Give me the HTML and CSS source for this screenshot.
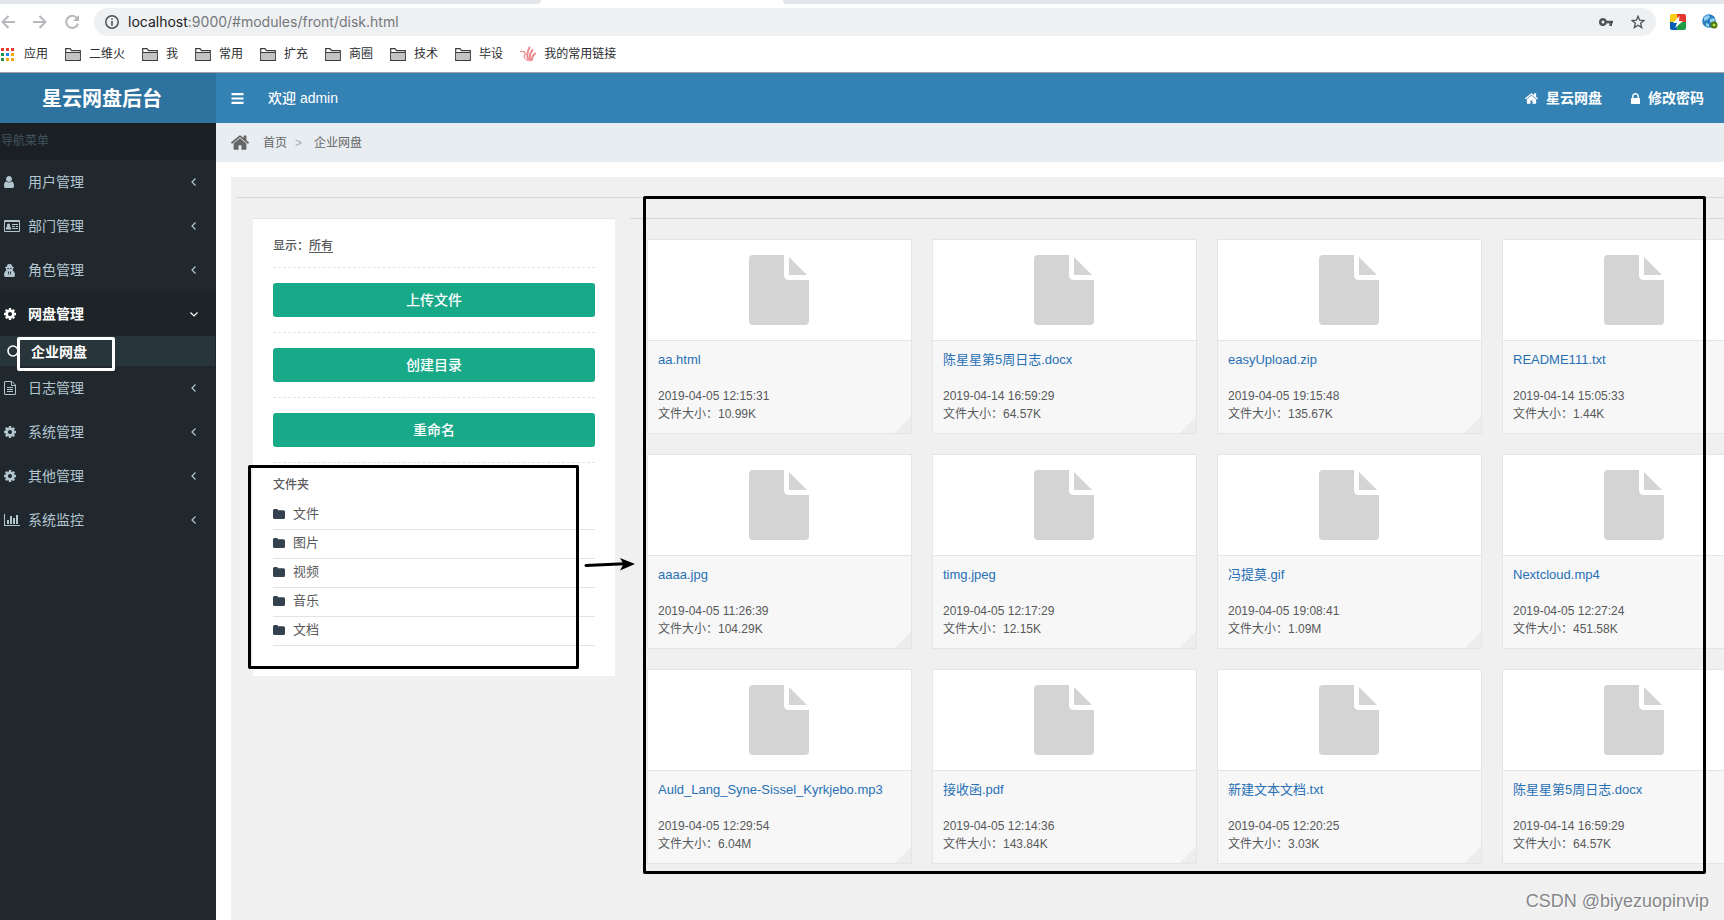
FILE: index.html
```html
<!DOCTYPE html>
<html lang="zh-CN">
<head>
<meta charset="utf-8">
<title>星云网盘后台</title>
<link rel="stylesheet" href="styles.css">
</head>
<body>
<svg class="defs" aria-hidden="true">
  <symbol id="cog" viewBox="128 128 1536 1536"><path d="M1152 896q0-106-75-181t-181-75-181 75-75 181 75 181 181 75 181-75 75-181zm512-109v222q0 12-8 23t-20 13l-185 28q-19 54-39 91 35 50 107 138 10 12 10 25t-9 23q-27 37-99 108t-94 71q-12 0-26-9l-138-108q-44 23-91 38-16 136-29 186-7 28-36 28h-222q-14 0-24.500-8.500t-11.500-21.500l-28-184q-49-16-90-37l-141 107q-10 9-25 9-14 0-25-11-126-114-165-168-7-10-7-23 0-12 8-23 15-21 51-66.500t54-70.500q-27-50-41-99l-183-27q-13-2-21-12.500t-8-23.500v-222q0-12 8-23t19-13l186-28q14-46 39-92-40-57-107-138-10-12-10-24 0-10 9-23 26-36 98.500-107.500t94.500-71.500q13 0 26 10l138 107q44-23 91-38 16-136 29-186 7-28 36-28h222q14 0 24.500 8.500t11.500 21.500l28 184q49 16 90 37l142-107q9-9 24-9 13 0 25 10 129 119 165 170 7 8 7 22 0 12-8 23-15 21-51 66.500t-54 70.500q26 50 41 98l183 28q13 2 21 12.500t8 23.500z"/></symbol>
  <symbol id="home" viewBox="88 253 1616 1283"><path d="M1472 992v480q0 26-19 45t-45 19h-384v-384h-256v384h-384q-26 0-45-19t-19-45v-480q0-1 .5-3t.5-3l575-474 575 474q1 2 1 6zm223-69l-62 74q-8 9-21 11h-3q-13 0-21-7l-692-577-692 577q-12 8-24 7-13-2-21-11l-62-74q-8-10-7-23.500t11-21.500l719-599q32-26 76-26t76 26l244 204v-195q0-14 9-23t23-9h192q14 0 23 9t9 23v408l219 182q10 8 11 21.500t-7 23.500z"/></symbol>
  <symbol id="lock" viewBox="320 128 1152 1408"><path d="M640 768h512v-192q0-106-75-181t-181-75-181 75-75 181v192zm832 96v576q0 40-28 68t-68 28h-960q-40 0-68-28t-28-68v-576q0-40 28-68t68-28h32v-192q0-184 132-316t316-132 316 132 132 316v192h32q40 0 68 28t28 68z"/></symbol>
  <symbol id="user" viewBox="256 128 1280 1536"><path d="M1536 1399q0 109-62.500 187t-150.500 78h-854q-88 0-150.500-78t-62.500-187q0-85 8.500-160.500t31.500-152 58.500-131 94-89 134.500-34.500q131 128 313 128t313-128q76 0 134.500 34.500t94 89 58.500 131 31.500 152 8.500 160.500zm-256-887q0 159-112.500 271.500t-271.500 112.500-271.500-112.500-112.500-271.500 112.500-271.500 271.500-112.500 271.500 112.500 112.500 271.500z"/></symbol>
  <symbol id="idcard" viewBox="0 0 16 12"><path fill-rule="evenodd" d="M1 0h14a1 1 0 0 1 1 1v10a1 1 0 0 1-1 1H1a1 1 0 0 1-1-1V1a1 1 0 0 1 1-1zM1 2v9h14V2zM2 9.500V8.300Q2 6.600 3.300 6.500Q2.800 6 2.800 5.300A1.700 1.700 0 0 1 6.200 5.300Q6.200 6 5.700 6.500Q7 6.600 7 8.300V9.500zM8 4h6v1H8zM8 6h3v1H8zM12 6h2v1h-2zM8 8h6v1H8z"/></symbol>
  <symbol id="secret" viewBox="0 0 11 13"><path fill-rule="evenodd" d="M2.800 2.500L3.700.2Q4.200-.1 5.500.3 6.800-.1 7.300.2L8.200 2.500 10 3.200v.6L9 4.200v1.600L8.600 6.600 10 7.500Q11 9 11 11.300 11 13 9.500 13h-8Q0 13 0 11.300 0 9 1 7.500L2.400 6.600 2 5.800V4.200L1 3.800V3.200zM3.200 4.300v.8h1.900v-.8zM5.900 4.300v.8h1.900v-.8zM3.800 7.500L4.400 11.500 5 8.800 4.700 7.500zM7.200 7.500L6.600 11.500 6 8.800 6.300 7.500z"/></symbol>
  <symbol id="filetext" viewBox="0 0 12 14"><path fill="none" stroke="currentColor" d="M.5 1v12q0 .5.500.5h10q.5 0 .5-.5V4L8 .5H1Q.5.500.5 1zM7.500.5v4h4M3 6.500h6M3 8.500h6M3 10.500h6"/></symbol>
  <symbol id="chart" viewBox="0 0 16 12"><path d="M0 0h1v11h15v1H0zM3 6h2v4H3zM6 2h2v8H6zM9 4h2v6H9zM12 1h2v9h-2z"/></symbol>
  <symbol id="left" viewBox="0 0 5 8"><path fill="none" stroke="currentColor" stroke-width="1.200" d="M4.500.5L1 4l3.500 3.500"/></symbol>
  <symbol id="down" viewBox="0 0 8 5"><path fill="none" stroke="currentColor" stroke-width="1.200" d="M.5.500L4 4 7.500.5"/></symbol>
  <symbol id="bars" viewBox="0 0 12 11"><path d="M0 0h12v2.200H0zM0 4.400h12v2.200H0zM0 8.800h12V11H0z"/></symbol>
  <symbol id="folder" viewBox="0 0 12 10"><path d="M0 1.500Q0 0 1.500 0h2Q5 0 5 1.200h5.500Q12 1.200 12 2.700v5.800Q12 10 10.500 10h-9Q0 10 0 8.500z"/></symbol>
  <symbol id="bmfolder" viewBox="0 0 16 13"><path d="M.7 12.300V.7H5l1.500 2h8.800v9.600z" fill="#fff" stroke="#3c3c3c" stroke-width="1.200"/><path d="M1.800 5h12.400v6.700H1.800z" fill="#c4c2c4"/><path d="M1 4.500h14" stroke="#3c3c3c"/></symbol>
  <symbol id="file" viewBox="0 0 60 70"><path d="M4 0h31v20q0 5 5 5h20v41q0 4-4 4H4q-4 0-4-4V4q0-4 4-4zM40 2l18 18H40z"/></symbol>
</svg>

<header class="browser">
  <div class="tabs"><span class="tab-prev"></span><span class="tab-current"></span><span class="tab-next"></span></div>
  <div class="toolbar">
    <button class="nav" aria-label="后退"><svg width="14" height="14" viewBox="0 0 14 14"><path d="M14 7H1.500M7.500 1L1.500 7l6 6"/></svg></button>
    <button class="nav" aria-label="前进"><svg width="14" height="14" viewBox="0 0 14 14"><path d="M0 7h12.500M6.500 1l6 6-6 6"/></svg></button>
    <button class="nav" aria-label="刷新"><svg width="14" height="14" viewBox="0 0 14 14"><path d="M12 3.200A6 6 0 1 0 13 8.600"/><path d="M14 0v6H8z" fill="#b5b7ba" stroke="none"/></svg></button>
    <div class="address">
      <svg width="14" height="14" viewBox="0 0 14 14"><circle cx="7" cy="7" r="6.200" fill="none" stroke="#4e5257" stroke-width="1.500"/><path d="M6.200 3.200h1.600v1.600H6.200zM6.200 6h1.600v4.800H6.200z" fill="#4e5257"/></svg>
      <span class="url"><b>localhost</b>:9000/#modules/front/disk.html</span>
      <svg width="14" height="8" viewBox="0 0 14 8"><path fill="#4e5257" fill-rule="evenodd" d="M4 0a4 4 0 0 1 3.800 2.700H14v2.600h-1V8h-2.600V5.300H7.800A4 4 0 1 1 4 0zM4 2.500a1.500 1.500 0 1 0 0 3 1.500 1.500 0 0 0 0-3z"/></svg>
      <svg width="14" height="14" viewBox="0 0 14 14"><path fill="none" stroke="#4e5257" stroke-width="1.300" d="M7 1.200l1.600 4 4.300.3-3.300 2.800 1.100 4.200L7 10.200l-3.700 2.300 1.100-4.200L1.100 5.500l4.300-.3z"/></svg>
    </div>
    <svg width="16" height="16" viewBox="0 0 16 16"><path fill="#fbcb16" d="M2 0h6v8H0V2Q0 0 2 0z"/><path fill="#e5352f" d="M7 0h7q2 0 2 2v6H8z"/><path fill="#0a5cb5" d="M0 8h8l-1 8H2q-2 0-2-2z"/><path fill="#219c46" d="M8 8h8v6q0 2-2 2H7z"/><path fill="#fff" d="M9.500 2L3 9h4l-2 5 8-7H9z"/></svg>
    <svg width="16" height="16" viewBox="0 0 16 16"><circle cx="7" cy="7" r="6.800" fill="#2b7fc0"/><path fill="#8fd0f0" d="M2 3l4-2 2 2-3 3-3 1zM8 5l4-1 1 3-3 2-2-1zM4 9l3 1v3l-3-1z"/><circle cx="12" cy="11" r="2.500" fill="#b8e04a" stroke="#4c7a10" stroke-width="2"/></svg>
  </div>
  <nav class="bookmarks">
    <a href="#"><svg width="14" height="13" viewBox="0 0 14 13"><path fill="#ea3a2f" d="M1 0h3v3H1zM6 0h3v3H6zM11 0h3v3h-3z"/><path fill="#219150" d="M1 5h3v3H1zM1 10h3v3H1z"/><path fill="#2684fc" d="M6 5h3v3H6z"/><path fill="#f5a60b" d="M11 5h3v3h-3zM6 10h3v3H6zM11 10h3v3h-3z"/></svg>应用</a>
    <a href="#"><svg width="16" height="13"><use href="#bmfolder"/></svg>二维火</a>
    <a href="#"><svg width="16" height="13"><use href="#bmfolder"/></svg>我</a>
    <a href="#"><svg width="16" height="13"><use href="#bmfolder"/></svg>常用</a>
    <a href="#"><svg width="16" height="13"><use href="#bmfolder"/></svg>扩充</a>
    <a href="#"><svg width="16" height="13"><use href="#bmfolder"/></svg>商圈</a>
    <a href="#"><svg width="16" height="13"><use href="#bmfolder"/></svg>技术</a>
    <a href="#"><svg width="16" height="13"><use href="#bmfolder"/></svg>毕设</a>
    <a href="#"><svg width="16" height="16" viewBox="0 0 16 16"><g fill="none" stroke="#ec8a8e" stroke-linecap="round"><path stroke-width="1.200" d="M.5 5.500q4-1 5 2.500-2 1-1 4"/><path stroke-width="2" d="M8 13Q6 8 9.500 1.500M10 13.500Q9 8 12.500 4M12 13.500q0-3.500 3-6"/><path d="M5 13q3 3 7 1.500"/></g></svg>我的常用链接</a>
  </nav>
</header>

<div class="app">
  <aside class="sidebar">
    <h1 class="brand">星云网盘后台</h1>
    <div class="menu-title">导航菜单</div>
    <nav class="menu">
      <a href="#"><span class="ico"><svg width="10" height="12"><use href="#user"/></svg></span>用户管理<svg class="arrow" width="5" height="8"><use href="#left"/></svg></a>
      <a href="#"><span class="ico"><svg width="16" height="12"><use href="#idcard"/></svg></span>部门管理<svg class="arrow" width="5" height="8"><use href="#left"/></svg></a>
      <a href="#"><span class="ico"><svg width="11" height="13"><use href="#secret"/></svg></span>角色管理<svg class="arrow" width="5" height="8"><use href="#left"/></svg></a>
      <a href="#" class="active"><span class="ico"><svg width="12" height="12"><use href="#cog"/></svg></span>网盘管理<svg class="arrow" width="8" height="5"><use href="#down"/></svg></a>
      <a href="#" class="sub"><svg width="12" height="12" viewBox="0 0 12 12"><circle cx="6" cy="6" r="5" fill="none" stroke="currentColor" stroke-width="1.600"/></svg><span class="marked">企业网盘</span></a>
      <a href="#"><span class="ico"><svg width="12" height="14"><use href="#filetext"/></svg></span>日志管理<svg class="arrow" width="5" height="8"><use href="#left"/></svg></a>
      <a href="#"><span class="ico"><svg width="12" height="12"><use href="#cog"/></svg></span>系统管理<svg class="arrow" width="5" height="8"><use href="#left"/></svg></a>
      <a href="#"><span class="ico"><svg width="12" height="12"><use href="#cog"/></svg></span>其他管理<svg class="arrow" width="5" height="8"><use href="#left"/></svg></a>
      <a href="#"><span class="ico"><svg width="16" height="12"><use href="#chart"/></svg></span>系统监控<svg class="arrow" width="5" height="8"><use href="#left"/></svg></a>
    </nav>
  </aside>

  <div class="page">
    <div class="topbar">
      <button class="toggle" aria-label="切换菜单"><svg width="13" height="11" preserveAspectRatio="none"><use href="#bars"/></svg></button>
      <span class="welcome">欢迎 admin</span>
      <a href="#"><svg width="13" height="11"><use href="#home"/></svg>星云网盘</a>
      <a href="#"><svg width="9" height="11"><use href="#lock"/></svg>修改密码</a>
    </div>
    <nav class="crumbs"><svg width="18" height="15"><use href="#home"/></svg><a href="#">首页</a><span class="sep">&gt;</span><span>企业网盘</span></nav>

    <main class="content">
      <div class="disk">
        <section class="panel">
          <p class="filter">显示：<a href="#">所有</a></p>
          <hr>
          <button class="primary">上传文件</button>
          <hr>
          <button class="primary">创建目录</button>
          <hr>
          <button class="primary">重命名</button>
          <hr>
          <h2>文件夹</h2>
          <ul class="folders">
            <li><a href="#"><svg width="12" height="10"><use href="#folder"/></svg>文件</a></li>
            <li><a href="#"><svg width="12" height="10"><use href="#folder"/></svg>图片</a></li>
            <li><a href="#"><svg width="12" height="10"><use href="#folder"/></svg>视频</a></li>
            <li><a href="#"><svg width="12" height="10"><use href="#folder"/></svg>音乐</a></li>
            <li><a href="#"><svg width="12" height="10"><use href="#folder"/></svg>文档</a></li>
          </ul>
          <div class="mark mark-folders"></div>
          <svg class="pointer" width="52" height="14" viewBox="0 0 52 14"><path d="M2 8.500L40 6.800" stroke="#000" stroke-width="3" stroke-linecap="round"/><path d="M36 1l15 6-15 6.500 3.500-6.500z"/></svg>
        </section>

        <section class="files">
          <article class="file"><div class="thumb"><svg width="60" height="70"><use href="#file"/></svg></div><div class="info"><a href="#">aa.html</a><small>2019-04-05 12:15:31</small><small>文件大小：10.99K</small></div></article>
          <article class="file"><div class="thumb"><svg width="60" height="70"><use href="#file"/></svg></div><div class="info"><a href="#">陈星星第5周日志.docx</a><small>2019-04-14 16:59:29</small><small>文件大小：64.57K</small></div></article>
          <article class="file"><div class="thumb"><svg width="60" height="70"><use href="#file"/></svg></div><div class="info"><a href="#">easyUpload.zip</a><small>2019-04-05 19:15:48</small><small>文件大小：135.67K</small></div></article>
          <article class="file"><div class="thumb"><svg width="60" height="70"><use href="#file"/></svg></div><div class="info"><a href="#">README111.txt</a><small>2019-04-14 15:05:33</small><small>文件大小：1.44K</small></div></article>
          <article class="file"><div class="thumb"><svg width="60" height="70"><use href="#file"/></svg></div><div class="info"><a href="#">aaaa.jpg</a><small>2019-04-05 11:26:39</small><small>文件大小：104.29K</small></div></article>
          <article class="file"><div class="thumb"><svg width="60" height="70"><use href="#file"/></svg></div><div class="info"><a href="#">timg.jpeg</a><small>2019-04-05 12:17:29</small><small>文件大小：12.15K</small></div></article>
          <article class="file"><div class="thumb"><svg width="60" height="70"><use href="#file"/></svg></div><div class="info"><a href="#">冯提莫.gif</a><small>2019-04-05 19:08:41</small><small>文件大小：1.09M</small></div></article>
          <article class="file"><div class="thumb"><svg width="60" height="70"><use href="#file"/></svg></div><div class="info"><a href="#">Nextcloud.mp4</a><small>2019-04-05 12:27:24</small><small>文件大小：451.58K</small></div></article>
          <article class="file"><div class="thumb"><svg width="60" height="70"><use href="#file"/></svg></div><div class="info"><a href="#">Auld_Lang_Syne-Sissel_Kyrkjebo.mp3</a><small>2019-04-05 12:29:54</small><small>文件大小：6.04M</small></div></article>
          <article class="file"><div class="thumb"><svg width="60" height="70"><use href="#file"/></svg></div><div class="info"><a href="#">接收函.pdf</a><small>2019-04-05 12:14:36</small><small>文件大小：143.84K</small></div></article>
          <article class="file"><div class="thumb"><svg width="60" height="70"><use href="#file"/></svg></div><div class="info"><a href="#">新建文本文档.txt</a><small>2019-04-05 12:20:25</small><small>文件大小：3.03K</small></div></article>
          <article class="file"><div class="thumb"><svg width="60" height="70"><use href="#file"/></svg></div><div class="info"><a href="#">陈星星第5周日志.docx</a><small>2019-04-14 16:59:29</small><small>文件大小：64.57K</small></div></article>
          <div class="mark mark-files"></div>
        </section>
      </div>
    </main>
  </div>
</div>
<div class="watermark">CSDN @biyezuopinvip</div>
</body>
</html>
```
FILE: styles.css
```css
* { box-sizing: border-box; }
body {
  margin: 0;
  min-height: 100vh;
  display: flex;
  flex-direction: column;
  position: relative;
  overflow: hidden;
  background: #fff;
  color: #58595b;
  font: 12px/18px "Liberation Sans", "Noto Sans CJK SC", sans-serif;
}
a { color: inherit; text-decoration: none; }
button { border: 0; padding: 0; background: none; font: inherit; color: inherit; }
svg { display: block; flex: none; fill: currentColor; }
h1, h2, p, ul { margin: 0; padding: 0; }
.defs { display: none; }

/* browser frame */
.browser { background: #fff; border-bottom: 1px solid #aaa0a8; }
.tabs { display: flex; height: 4px; }
.tab-prev { flex: 0 0 541px; background: #e2e5e9; border-bottom-right-radius: 4px; }
.tab-current { flex: 0 0 242px; }
.tab-next { flex: 1; background: #e2e5e9; border-bottom-left-radius: 4px; }
.toolbar { display: flex; align-items: center; gap: 16px; padding: 4px 6px 0 1px; }
.nav { margin-right: 2px; }
.nav svg { fill: none; stroke: #b5b7ba; stroke-width: 2; }
.address {
  flex: 1;
  display: flex;
  align-items: center;
  gap: 18px;
  height: 28px;
  margin: 0 -2px 0 -3px;
  padding: 0 11px;
  border-radius: 14px;
  background: #eff0f2;
}
.url { flex: 1; margin-left: -9px; font: 14px/20px Inter, Roboto, sans-serif; color: #74787d; }
.url b { font-weight: 400; color: #202124; }
.bookmarks { display: flex; gap: 17px; height: 36px; align-items: center; color: #2b2d30; }
.bookmarks a { display: flex; align-items: center; gap: 8px; }
.bookmarks a:first-child { gap: 10px; }

/* application shell */
.app { flex: 1; display: flex; }
.sidebar { flex: 0 0 216px; background: #20282e; color: #b3c5ce; }
.brand {
  height: 50px;
  padding-left: 42px;
  background: #2e739f;
  color: #fff;
  font-size: 20px;
  font-weight: 700;
  line-height: 52px;
}
.menu-title { height: 37px; padding-left: 1px; line-height: 37px; background: #1a1f23; color: #41555f; }
.menu a { display: flex; align-items: center; gap: 8px; height: 44px; padding: 0 20px 0 4px; font-size: 14px; }
.ico { width: 16px; }
.arrow { margin-left: auto; }
.menu .active { background: #1d2427; color: #fff; font-weight: 600; padding-right: 18px; }
.menu .sub { height: 30px; gap: 0; padding-left: 7px; margin-right: 1px; background: #28353a; color: #fff; font-weight: 600; }
.marked {
  width: 98px;
  height: 34px;
  flex: none;
  margin: 5px 0 0 -2px;
  padding-left: 11px;
  border: 3px solid #fff;
  border-radius: 2px;
  line-height: 24px;
}

.page { flex: 1; min-width: 0; display: flex; flex-direction: column; }
.topbar {
  display: flex;
  align-items: center;
  height: 50px;
  padding: 0 20px 0 15px;
  background: #3481b4;
  color: #fff;
  font-size: 14px;
  font-weight: 500;
}
.welcome { flex: 1; margin-left: 24px; }
.topbar a { display: flex; align-items: center; gap: 8px; margin-left: 29px; font-weight: 600; }
.crumbs { display: flex; align-items: center; height: 39px; padding: 0 15px; background: #e8edf1; color: #666; }
.crumbs a { margin-left: 14px; }
.sep { margin: 0 12px 0 8px; color: #aaa; }

.content { flex: 1; display: flex; padding: 15px 0 0 15px; }
.disk {
  flex: 1;
  min-width: 0;
  display: flex;
  align-items: flex-start;
  gap: 15px;
  padding: 41px 0 20px 22px;
  background: linear-gradient(#d8d8d8, #d8d8d8) 5px 20px / 100% 1px no-repeat #f0f0f0;
}
.panel {
  position: relative;
  flex: 0 0 362px;
  padding: 20px 20px 30px;
  border-top: 1px solid #e6e6e6;
  background: #fff;
}
.filter, .panel h2 { font-size: 12px; font-weight: 500; line-height: 14px; }
.filter { margin-bottom: 14px; }
.filter a { text-decoration: underline; text-underline-offset: 2px; }
.panel hr { height: 1px; margin: 15px 0; border: 0; border-top: 1px dashed #e2e4e6; }
.filter + hr { margin-top: 0; }
.primary {
  display: block;
  width: 100%;
  height: 34px;
  border-radius: 3px;
  background: #18a988;
  color: #fff;
  font-size: 14px;
  font-weight: 500;
}
.folders { list-style: none; margin-top: 9px; }
.folders a {
  display: flex;
  align-items: center;
  gap: 8px;
  height: 29px;
  padding-bottom: 2px;
  border-bottom: 1px solid #e4e4e4;
  font-size: 13px;
}
.folders svg { color: #34424f; }

.files {
  position: relative;
  flex: 1;
  min-width: 0;
  display: grid;
  grid-template-columns: repeat(4, 265px);
  gap: 20px;
  padding: 20px 0 0 17px;
  border-top: 1px solid #d8d8d8;
}
.file { border: 1px solid #e3e5e7; background: #f7f7f7; }
.thumb { display: flex; justify-content: center; height: 101px; padding: 15px 2px 0 0; border-bottom: 1px solid #e1e5e8; background: #fff; color: #d4d4d4; }
.info {
  padding: 10px;
  background: linear-gradient(135deg, transparent 50%, #ededed 50%) right bottom / 16px 16px no-repeat;
}
.info a { display: block; margin-bottom: 18px; color: #2870b5; font-size: 13px; }
.info small { display: block; font-size: 12px; }

/* annotations laid over the page */
.mark { position: absolute; border: 3px solid #000; border-radius: 2px; outline: 1px solid #0007; outline-offset: -1px; }
.mark-folders { left: -5px; top: 246px; width: 331px; height: 204px; }
.mark-files { left: 13px; top: -23px; width: 1063px; height: 678px; }
.pointer { position: absolute; left: 331px; top: 338px; z-index: 1; color: #000; }
.watermark { position: absolute; right: 15px; bottom: 9px; font-size: 18px; line-height: 20px; color: #85868a; text-shadow: 1px 1px #fff; }
```
